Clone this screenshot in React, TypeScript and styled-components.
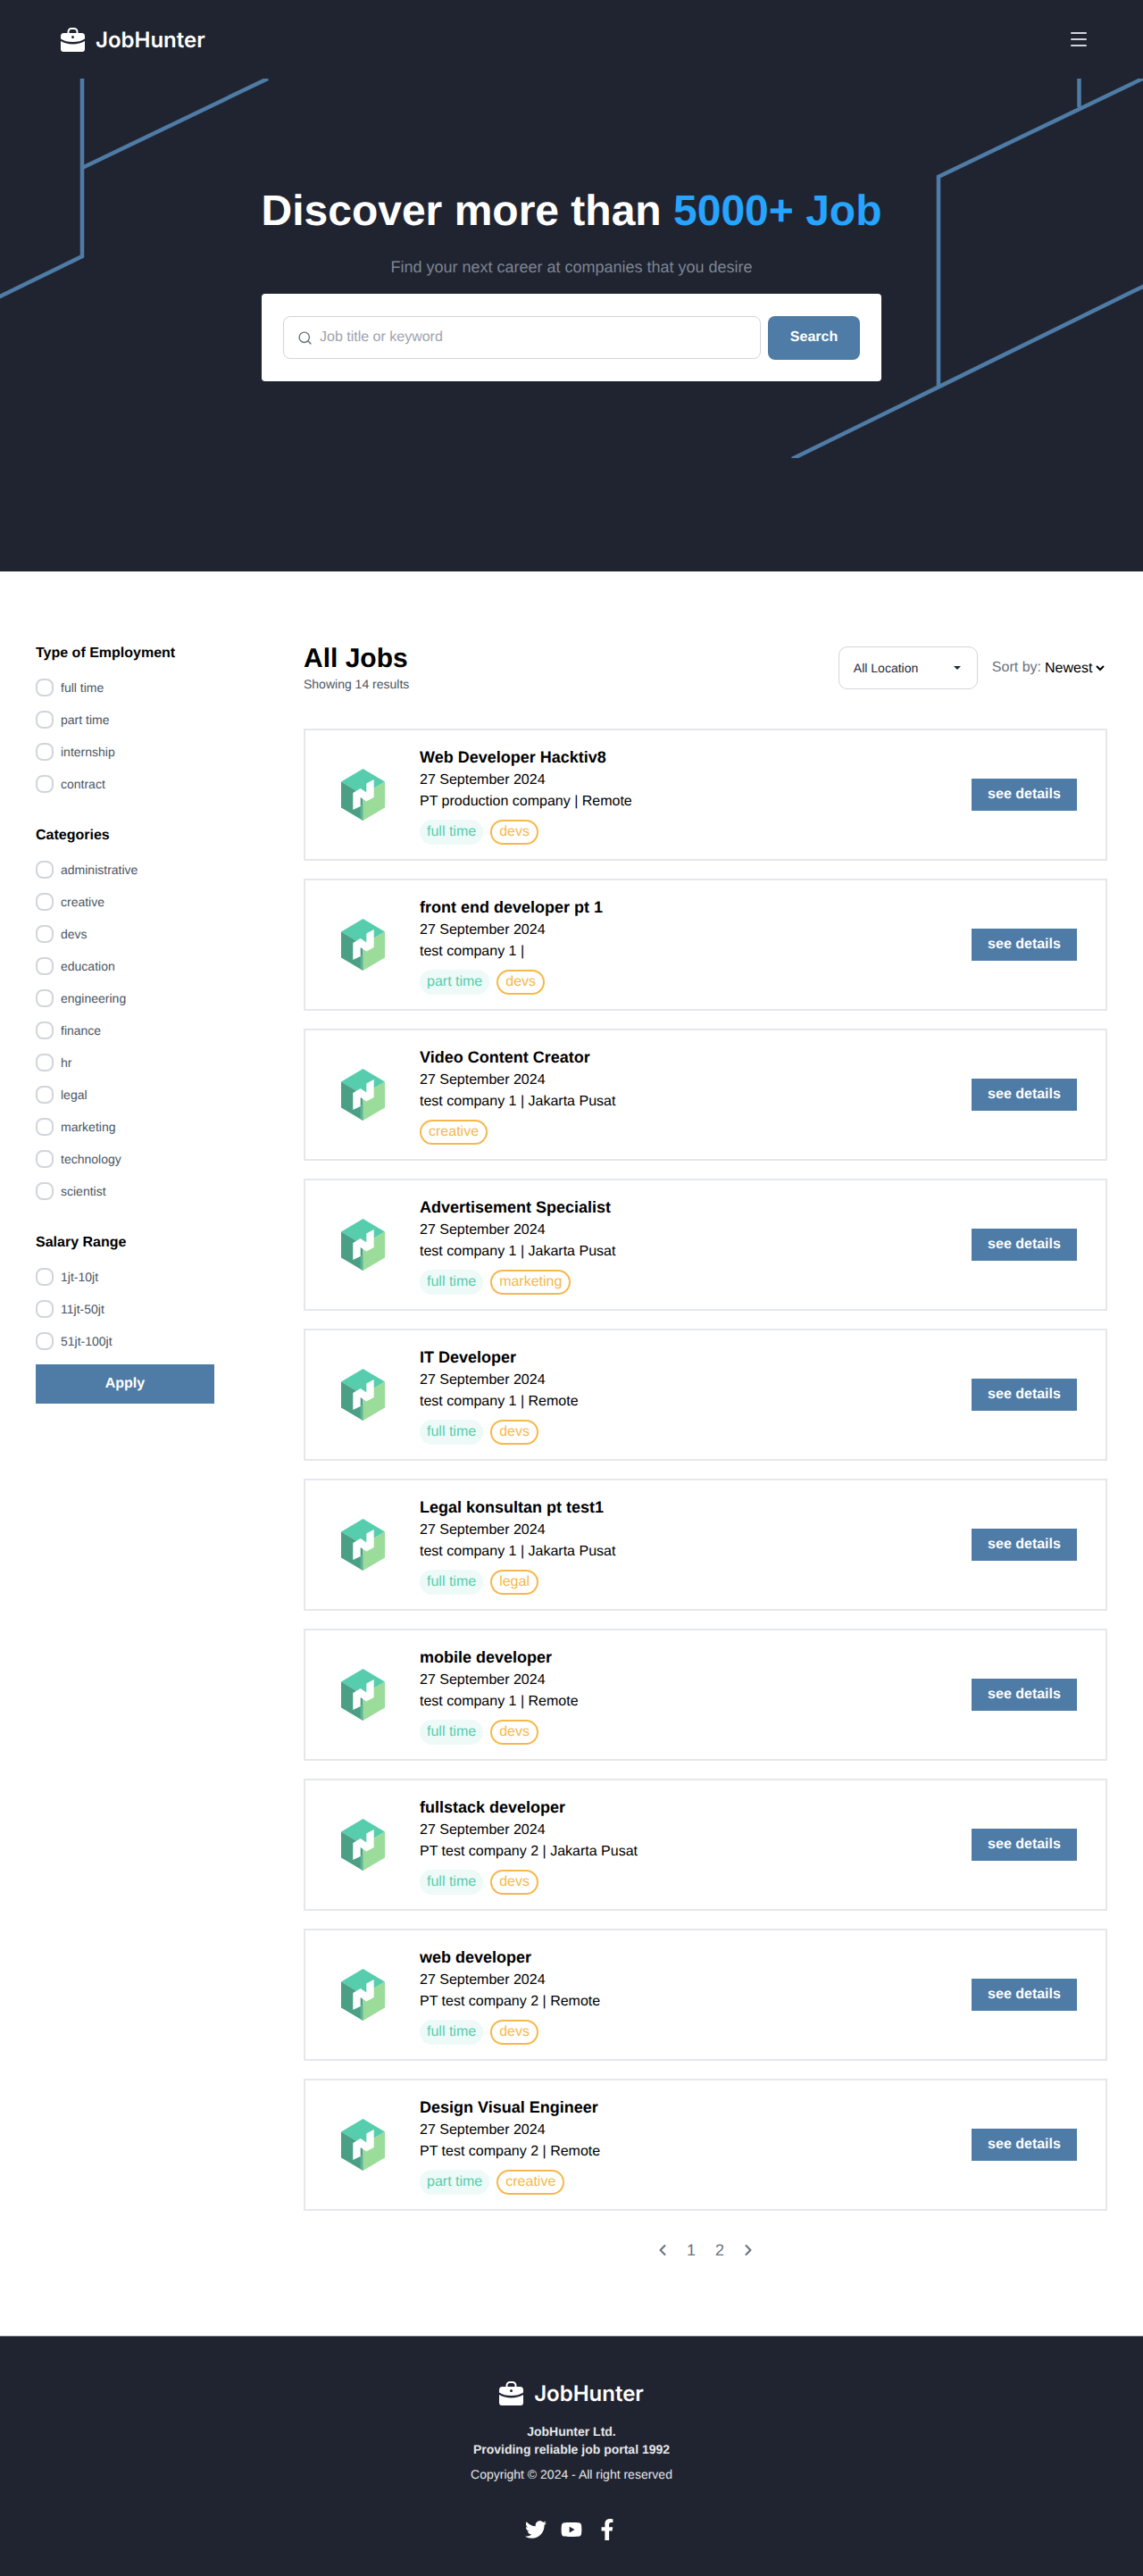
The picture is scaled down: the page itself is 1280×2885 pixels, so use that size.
import styled, { createGlobalStyle } from 'styled-components'
import { ChevronLeft, ChevronRight, Menu, Search } from 'lucide-react'
import { FaFacebookF, FaTwitter, FaYoutube } from 'react-icons/fa'

const GlobalStyle = createGlobalStyle`
  * {
    box-sizing: border-box;
  }

  body {
    margin: 0;
    background-color: #ffffff;
    font-family: 'Liberation Sans', Arial, sans-serif;
    color: #000000;
    text-rendering: geometricPrecision;
  }
`

// -- Hero --
const Hero = styled.section`
  position: relative;
  height: 640px;
  background-color: #202430;
  overflow: hidden;
`

const HeroLines = styled.svg`
  position: absolute;
  top: 88px;
  left: 0;
  width: 1280px;
  height: 425px;
`

const Nav = styled.nav`
  position: relative;
  display: flex;
  align-items: center;
  justify-content: space-between;
  height: 88px;
  padding: 0 60px 0 68px;
  color: #d1d5db;
`

const Brand = styled.div`
  display: flex;
  align-items: center;
  gap: 12px;
  color: #ffffff;
`

const BrandName = styled.span`
  font-family: 'Inter', 'Liberation Sans', sans-serif;
  font-size: 24px;
  font-weight: 600;
  line-height: 27px;
`

const HeroContent = styled.div`
  position: relative;
  display: flex;
  flex-direction: column;
  align-items: center;
  padding-top: 125px;
`

const HeroTitle = styled.h1`
  margin: 0;
  font-size: 48px;
  line-height: 48px;
  font-weight: 700;
  color: #ffffff;
`

const HeroAccent = styled.span`
  color: #26a4ff;
`

const HeroSubtitle = styled.p`
  margin: 24px 0 16px;
  font-size: 18px;
  line-height: 28px;
  color: #7c8493;
`

const SearchCard = styled.form`
  display: flex;
  align-items: center;
  gap: 8px;
  width: 694px;
  height: 98px;
  padding: 0 24px;
  background-color: #ffffff;
  border-radius: 4px;
`

const SearchField = styled.label`
  display: flex;
  align-items: center;
  gap: 8px;
  flex: 1;
  height: 48px;
  padding: 0 15px;
  border: 1px solid #d1d5db;
  border-radius: 8px;
  color: #6b7280;
`

const SearchInput = styled.input`
  flex: 1;
  padding: 0;
  border: none;
  outline: none;
  font-family: inherit;
  font-size: 16px;
  text-rendering: geometricPrecision;

  &::placeholder {
    color: #9ca3af;
  }
`

const SearchButton = styled.button`
  width: 103px;
  height: 49px;
  border: none;
  border-radius: 8px;
  background-color: #4f7ca6;
  color: #ffffff;
  font-family: inherit;
  font-size: 16px;
  font-weight: 700;
  text-rendering: geometricPrecision;
`

// -- Listing --
const Listing = styled.main`
  display: flex;
  gap: 100px;
  padding: 80px 40px 0;
`

const Sidebar = styled.aside`
  flex: 0 0 200px;
`

const FilterGroup = styled.div`
  display: flex;
  flex-direction: column;
  gap: 16px;
  margin-bottom: 36px;

  &:last-of-type {
    margin-bottom: 16px;
  }
`

const FilterTitle = styled.h3`
  margin: 0;
  font-size: 16px;
  line-height: 24px;
  font-weight: 700;
  color: #000000;
`

const FilterOption = styled.label`
  display: flex;
  align-items: center;
  gap: 8px;
  height: 20px;
  font-size: 14px;
  color: #4b5563;
`

const FilterBox = styled.span`
  width: 20px;
  height: 20px;
  border: 2px solid #d1d5db;
  border-radius: 8px;
`

const ApplyButton = styled.button`
  width: 100%;
  height: 44px;
  border: none;
  background-color: #4f7ca6;
  color: #ffffff;
  font-family: inherit;
  font-size: 16px;
  font-weight: 700;
  text-rendering: geometricPrecision;
`

const Results = styled.section`
  flex: 1;
`

const Toolbar = styled.div`
  display: flex;
  align-items: flex-start;
  justify-content: space-between;
  margin-bottom: 40px;
`

const ResultsTitle = styled.h2`
  margin: 0;
  font-size: 30px;
  line-height: 36px;
  font-weight: 700;
`

const ResultsCount = styled.p`
  margin: 0;
  font-size: 14px;
  line-height: 20px;
  color: #4b5563;
`

const Controls = styled.div`
  display: flex;
  align-items: center;
  gap: 16px;
  padding-top: 4px;
`

const LocationSelect = styled.div`
  display: flex;
  align-items: center;
  justify-content: space-between;
  width: 156px;
  height: 48px;
  padding: 0 18px 0 16px;
  border: 1px solid #d1d5db;
  border-radius: 10px;
  font-size: 14px;
  color: #1f2937;
`

const Caret = styled.span`
  width: 0;
  height: 0;
  border-left: 4px solid transparent;
  border-right: 4px solid transparent;
  border-top: 4px solid #1f2937;
`

const SortLabel = styled.label`
  display: flex;
  align-items: center;
  font-size: 16px;
  color: #6b7280;
`

const SortSelect = styled.select`
  border: none;
  outline: none;
  background: transparent;
  font-family: inherit;
  font-size: 16px;
  color: #000000;
  text-rendering: geometricPrecision;
`

const JobList = styled.div`
  display: flex;
  flex-direction: column;
  gap: 20px;
`

const JobCard = styled.article`
  display: flex;
  align-items: center;
  gap: 39px;
  height: 148px;
  padding: 0 32px 0 40px;
  border: 2px solid #e5e7eb;
`

const JobInfo = styled.div`
  flex: 1;
`

const JobTitle = styled.h3`
  margin: 0;
  font-size: 18px;
  line-height: 28px;
  font-weight: 700;
`

const JobMeta = styled.p`
  margin: 0;
  font-size: 16px;
  line-height: 24px;
`

const TagRow = styled.div`
  display: flex;
  gap: 8px;
  margin-top: 8px;
`

const Tag = styled.span<{ $outlined?: boolean }>`
  height: 28px;
  padding: 0 8px;
  border-radius: 14px;
  border: ${(p) => (p.$outlined ? '2px solid #f6b84b' : 'none')};
  background-color: ${(p) => (p.$outlined ? 'transparent' : '#56cdad1a')};
  color: ${(p) => (p.$outlined ? '#f6b84b' : '#56cdad')};
  font-size: 16px;
  line-height: ${(p) => (p.$outlined ? '24px' : '28px')};
`

const DetailsButton = styled.button`
  width: 118px;
  height: 36px;
  border: none;
  background-color: #4f7ca6;
  color: #ffffff;
  font-family: inherit;
  font-size: 16px;
  font-weight: 700;
  text-rendering: geometricPrecision;
`

const Pagination = styled.nav`
  display: flex;
  align-items: center;
  justify-content: center;
  height: 40px;
  margin: 24px 0 76px;
  color: #6b7280;
`

const PageItem = styled.span`
  display: flex;
  align-items: center;
  justify-content: center;
  width: 32px;
  font-size: 18px;
`

// -- Footer --
const Footer = styled.footer`
  display: flex;
  flex-direction: column;
  align-items: center;
  height: 269px;
  padding-top: 50px;
  border-top: 1px solid #6b7280;
  background-color: #202430;
  color: #e5e7eb;
`

const FooterBrand = styled(Brand)`
  margin-bottom: 19px;
`

const FooterCompany = styled.p`
  margin: 0 0 8px;
  font-size: 14px;
  line-height: 20px;
  font-weight: 700;
  text-align: center;
`

const FooterCopyright = styled.p`
  margin: 0 0 40px;
  font-size: 14px;
  line-height: 20px;
`

const SocialRow = styled.div`
  display: flex;
  gap: 16px;
  color: #ffffff;
  font-size: 24px;
`

const BriefcaseIcon = () => (
  <svg width="27" height="27" viewBox="0 0 27 27" fill="currentColor">
    <path d="M8.5 7V4.5A3.5 3.5 0 0 1 12 1h3a3.5 3.5 0 0 1 3.5 3.5V7" fill="none" stroke="currentColor" strokeWidth="2" />
    <path d="M3.5 6h20A3.5 3.5 0 0 1 27 9.5v3c-3.6 2.4-8 3.6-13.5 3.6S3.600 14.900 0 12.500v-3A3.500 3.500 0 0 1 3.500 6z" />
    <path d="M0 15c3.800 2.300 8.200 3.500 13.500 3.500S23.200 17.300 27 15v9a3 3 0 0 1-3 3H3a3 3 0 0 1-3-3z" />
    <circle cx="13.500" cy="10.500" r="1.500" fill="#202430" />
  </svg>
)

const CompanyLogo = () => (
  <svg width="49" height="58" viewBox="0 0 49 58" style={{ flexShrink: 0 }}>
    <polygon points="24.500,0 49,14.500 24.500,29 0,14.500" fill="#56cdad" />
    <polygon points="0,14.500 24.500,29 24.500,58 0,43.500" fill="#4a9f85" />
    <polygon points="49,14.500 24.500,29 24.500,58 49,43.500" fill="#9bdc9b" />
    <polygon points="21.700,41 24.500,39.500 24.500,58 21.700,56.300" fill="#5fb594" />
    <polygon points="13.300,27 21.700,22 28.300,26.500 28.300,16.500 36.700,12 36.700,32 28.300,36.500 21.700,32 21.700,42 13.300,46" fill="#ffffff" />
  </svg>
)

const employment = ['full time', 'part time', 'internship', 'contract']
const categories = [
  'administrative',
  'creative',
  'devs',
  'education',
  'engineering',
  'finance',
  'hr',
  'legal',
  'marketing',
  'technology',
  'scientist',
]
const salaries = ['1jt-10jt', '11jt-50jt', '51jt-100jt']

const jobs = [
  { title: 'Web Developer Hacktiv8', company: 'PT production company | Remote', type: 'full time', category: 'devs' },
  { title: 'front end developer pt 1', company: 'test company 1 |', type: 'part time', category: 'devs' },
  { title: 'Video Content Creator', company: 'test company 1 | Jakarta Pusat', category: 'creative' },
  { title: 'Advertisement Specialist', company: 'test company 1 | Jakarta Pusat', type: 'full time', category: 'marketing' },
  { title: 'IT Developer', company: 'test company 1 | Remote', type: 'full time', category: 'devs' },
  { title: 'Legal konsultan pt test1', company: 'test company 1 | Jakarta Pusat', type: 'full time', category: 'legal' },
  { title: 'mobile developer', company: 'test company 1 | Remote', type: 'full time', category: 'devs' },
  { title: 'fullstack developer', company: 'PT test company 2 | Jakarta Pusat', type: 'full time', category: 'devs' },
  { title: 'web developer', company: 'PT test company 2 | Remote', type: 'full time', category: 'devs' },
  { title: 'Design Visual Engineer', company: 'PT test company 2 | Remote', type: 'part time', category: 'creative' },
]

const filterGroups = [
  { title: 'Type of Employment', options: employment },
  { title: 'Categories', options: categories },
  { title: 'Salary Range', options: salaries },
]

const App = () => {
  return (
    <>
      <GlobalStyle />
      <Hero>
        <HeroLines viewBox="0 88 1280 425" fill="none" stroke="#4f7ca6" strokeWidth="4.5">
          <path d="M92 88V287L-10 337" />
          <path d="M92 188L300 88" />
          <path d="M1208.500 88V120" />
          <path d="M1290 83L1051 198V432" />
          <path d="M1290 316L887 514" />
        </HeroLines>
        <Nav>
          <Brand>
            <BriefcaseIcon />
            <BrandName>JobHunter</BrandName>
          </Brand>
          <Menu size={24} />
        </Nav>
        <HeroContent>
          <HeroTitle>
            Discover more than <HeroAccent>5000+ Job</HeroAccent>
          </HeroTitle>
          <HeroSubtitle>Find your next career at companies that you desire</HeroSubtitle>
          <SearchCard>
            <SearchField>
              <Search size={17} />
              <SearchInput placeholder="Job title or keyword" />
            </SearchField>
            <SearchButton type="button">Search</SearchButton>
          </SearchCard>
        </HeroContent>
      </Hero>

      <Listing>
        <Sidebar>
          {filterGroups.map((group) => (
            <FilterGroup key={group.title}>
              <FilterTitle>{group.title}</FilterTitle>
              {group.options.map((option) => (
                <FilterOption key={option}>
                  <FilterBox />
                  {option}
                </FilterOption>
              ))}
            </FilterGroup>
          ))}
          <ApplyButton type="button">Apply</ApplyButton>
        </Sidebar>

        <Results>
          <Toolbar>
            <div>
              <ResultsTitle>All Jobs</ResultsTitle>
              <ResultsCount>Showing 14 results</ResultsCount>
            </div>
            <Controls>
              <LocationSelect>
                All Location
                <Caret />
              </LocationSelect>
              <SortLabel>
                Sort by:
                <SortSelect defaultValue="Newest">
                  <option>Newest</option>
                  <option>Oldest</option>
                </SortSelect>
              </SortLabel>
            </Controls>
          </Toolbar>

          <JobList>
            {jobs.map((job) => (
              <JobCard key={job.title}>
                <CompanyLogo />
                <JobInfo>
                  <JobTitle>{job.title}</JobTitle>
                  <JobMeta>27 September 2024</JobMeta>
                  <JobMeta>{job.company}</JobMeta>
                  <TagRow>
                    {job.type && <Tag>{job.type}</Tag>}
                    <Tag $outlined>{job.category}</Tag>
                  </TagRow>
                </JobInfo>
                <DetailsButton type="button">see details</DetailsButton>
              </JobCard>
            ))}
          </JobList>

          <Pagination>
            <PageItem>
              <ChevronLeft size={20} strokeWidth={2.5} />
            </PageItem>
            <PageItem>1</PageItem>
            <PageItem>2</PageItem>
            <PageItem>
              <ChevronRight size={20} strokeWidth={2.5} />
            </PageItem>
          </Pagination>
        </Results>
      </Listing>

      <Footer>
        <FooterBrand>
          <BriefcaseIcon />
          <BrandName>JobHunter</BrandName>
        </FooterBrand>
        <FooterCompany>
          JobHunter Ltd.
          <br />
          Providing reliable job portal 1992
        </FooterCompany>
        <FooterCopyright>Copyright © 2024 - All right reserved</FooterCopyright>
        <SocialRow>
          <FaTwitter />
          <FaYoutube />
          <FaFacebookF />
        </SocialRow>
      </Footer>
    </>
  )
}

export default App
